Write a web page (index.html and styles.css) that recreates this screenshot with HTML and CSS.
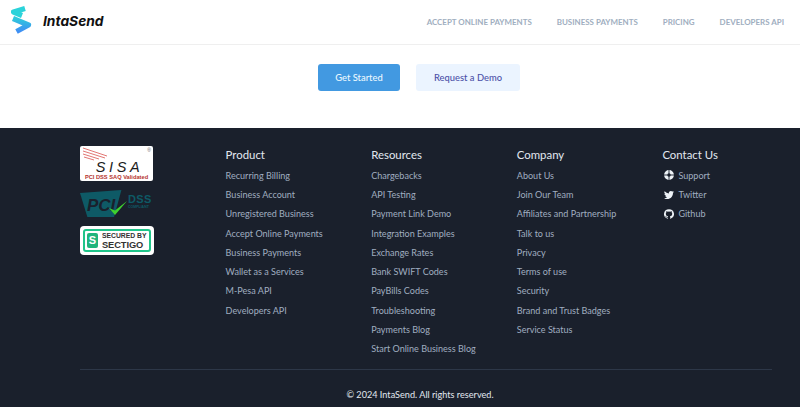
FILE: index.html
```html
<!DOCTYPE html>
<html lang="en">
<head>
<meta charset="utf-8">
<title>IntaSend</title>
<link rel="stylesheet" href="styles.css">
</head>
<body>
<header class="topbar">
  <a class="brand" href="#">
    <svg class="brand-mark" width="22" height="32" viewBox="11 4 22 32">
      <defs>
        <linearGradient id="g2" x1="0" y1="0" x2="0" y2="1"><stop offset="0" stop-color="#2fc8dc"/><stop offset="1" stop-color="#3f8ff4"/></linearGradient>
      </defs>
      <path d="M25 8.5 L13.5 12 L22 15.5" fill="none" stroke="#2bd3da" stroke-width="5.2" stroke-linejoin="round"/>
      <path d="M13 18.5 L28.5 25 L16.5 31.5" fill="none" stroke="url(#g2)" stroke-width="5.2" stroke-linejoin="round"/>
    </svg>
    <span class="brand-name">IntaSend</span>
  </a>
  <nav class="nav">
    <a href="#">ACCEPT ONLINE PAYMENTS</a>
    <a href="#">BUSINESS PAYMENTS</a>
    <a href="#">PRICING</a>
    <a href="#">DEVELOPERS API</a>
  </nav>
</header>
<section class="cta">
  <a class="btn btn-primary" href="#">Get Started</a>
  <a class="btn btn-soft" href="#">Request a Demo</a>
</section>
<footer class="footer">
  <div class="cols">
    <div class="col badges">
      <div class="badge sisa">
        <svg class="sisa-lines" width="26" height="18" viewBox="0 0 26 18"><path d="M1 1 L25 9 M1 4 L23 11 M1 7 L17 12 M2 10 L12 13" stroke="#d9534f" stroke-width=".8" fill="none"/></svg>
        <span class="sisa-reg">®</span>
        <span class="sisa-mark">SISA</span>
        <span class="sisa-sub">PCI DSS SAQ Validated</span>
      </div>
      <div class="pci">
        <span class="pci-word">PCI</span>
        <svg class="pci-check" width="20" height="20" viewBox="0 0 20 20"><path d="M1 11 L7 18 L19 4 L7 13.5 Z" fill="#3fd12f"/></svg>
        <span class="pci-side"><b>DSS</b><i>COMPLIANT</i></span>
      </div>
      <div class="sectigo">
        <span class="sectigo-inner">
          <span class="sectigo-s">S</span>
          <span class="sectigo-text"><span>SECURED BY</span><b>SECTIGO</b></span>
        </span>
      </div>
    </div>
    <div class="col">
      <h3>Product</h3>
      <a href="#">Recurring Billing</a>
      <a href="#">Business Account</a>
      <a href="#">Unregistered Business</a>
      <a href="#">Accept Online Payments</a>
      <a href="#">Business Payments</a>
      <a href="#">Wallet as a Services</a>
      <a href="#">M-Pesa API</a>
      <a href="#">Developers API</a>
    </div>
    <div class="col">
      <h3>Resources</h3>
      <a href="#">Chargebacks</a>
      <a href="#">API Testing</a>
      <a href="#">Payment Link Demo</a>
      <a href="#">Integration Examples</a>
      <a href="#">Exchange Rates</a>
      <a href="#">Bank SWIFT Codes</a>
      <a href="#">PayBills Codes</a>
      <a href="#">Troubleshooting</a>
      <a href="#">Payments Blog</a>
      <a href="#">Start Online Business Blog</a>
    </div>
    <div class="col">
      <h3>Company</h3>
      <a href="#">About Us</a>
      <a href="#">Join Our Team</a>
      <a href="#">Affiliates and Partnership</a>
      <a href="#">Talk to us</a>
      <a href="#">Privacy</a>
      <a href="#">Terms of use</a>
      <a href="#">Security</a>
      <a href="#">Brand and Trust Badges</a>
      <a href="#">Service Status</a>
    </div>
    <div class="col">
      <h3>Contact Us</h3>
      <a class="ico" href="#"><svg width="10" height="10" viewBox="0 0 10 10"><circle cx="5" cy="5" r="3.3" fill="none" stroke="#edf2f7" stroke-width="3.2"/><path d="M5 0V10M0 5H10" stroke="#1a202c" stroke-width=".9"/></svg>Support</a>
      <a class="ico" href="#"><svg width="10" height="10" viewBox="0 0 24 24"><path fill="#edf2f7" d="M23.95 4.57a10 10 0 0 1-2.82.77 4.96 4.96 0 0 0 2.16-2.72 9.9 9.9 0 0 1-3.13 1.19 4.92 4.92 0 0 0-8.38 4.48A13.98 13.98 0 0 1 1.64 3.16a4.92 4.92 0 0 0 1.52 6.57 4.9 4.9 0 0 1-2.23-.62v.06a4.92 4.92 0 0 0 3.95 4.83 4.9 4.9 0 0 1-2.21.08 4.94 4.94 0 0 0 4.6 3.42A9.87 9.87 0 0 1 0 19.54a13.94 13.94 0 0 0 7.55 2.21c9.05 0 14-7.5 14-13.98 0-.21 0-.42-.02-.63a9.94 9.94 0 0 0 2.42-2.57z"/></svg>Twitter</a>
      <a class="ico" href="#"><svg width="10" height="10" viewBox="0 0 24 24"><path fill="#edf2f7" d="M12 .3a12 12 0 0 0-3.8 23.38c.6.12.83-.26.83-.57v-2.23c-3.34.73-4.03-1.42-4.03-1.42-.55-1.39-1.33-1.76-1.33-1.76-1.09-.74.08-.73.08-.73 1.2.09 1.84 1.24 1.84 1.24 1.07 1.83 2.81 1.3 3.5 1 .1-.78.42-1.31.76-1.61-2.67-.3-5.47-1.33-5.47-5.93 0-1.31.47-2.38 1.24-3.22-.14-.3-.54-1.52.1-3.18 0 0 1-.32 3.3 1.23a11.5 11.5 0 0 1 6 0c2.28-1.55 3.29-1.23 3.29-1.23.64 1.66.24 2.88.12 3.18a4.65 4.65 0 0 1 1.23 3.22c0 4.61-2.8 5.63-5.48 5.92.42.36.81 1.1.81 2.22v3.29c0 .32.22.7.82.58A12 12 0 0 0 12 .3z"/></svg>Github</a>
    </div>
  </div>
  <div class="rule"></div>
  <p class="copy">© 2024 IntaSend. All rights reserved.</p>
</footer>
</body>
</html>
```

FILE: styles.css
```css
* { box-sizing: border-box; }
html, body { margin: 0; padding: 0; }
body { width: 800px; height: 407px; overflow: hidden; background: #fff; font-family: Lato, "Noto Sans", sans-serif; }
a { text-decoration: none; color: inherit; }

.topbar { height: 45px; border-bottom: 1px solid #efefef; display: flex; align-items: center; justify-content: space-between; padding: 0 16px 0 11px; }
.brand { display: flex; align-items: center; gap: 10px; }
.brand-mark { display: block; margin-top: -4px; }
.brand-name { font: italic 700 13.8px Inter, sans-serif; color: #111; margin-top: -3px; }
.nav { display: flex; gap: 25px; font: 700 7.95px Lato, sans-serif; color: #a0aec0; padding-bottom: 1px; }

.cta { height: 83px; display: flex; align-items: flex-start; gap: 16px; padding: 19px 0 0 318px; }
.btn { height: 27px; display: flex; align-items: center; justify-content: center; border-radius: 3px; font-size: 9.4px; font-weight: 500; }
.btn-primary { width: 82px; background: #4299e1; color: #ebf8ff; }
.btn-soft { width: 104px; background: #ebf4ff; color: #4c51a8; }

.footer { height: 279px; background: #1a202c; padding: 18px 28px 0 80px; }
.cols { display: grid; grid-template-columns: repeat(5, 145.6px); height: 223px; }
.col { display: flex; flex-direction: column; align-items: flex-start; }
.col h3 { margin: 0; height: 18px; font-size: 11.4px; line-height: 18px; font-weight: 400; color: #e2e8f0; }
.col a { height: 19.3px; line-height: 19.3px; font-size: 9.05px; color: #a0aec0; white-space: nowrap; }
.col h3 + a { margin-top: 1.7px; }
.col .ico { display: flex; align-items: center; gap: 4px; padding-left: 2px; }

.badge { position: relative; width: 73px; height: 35px; border-radius: 2px; background: #fff; display: flex; flex-direction: column; align-items: center; overflow: hidden; }
.sisa-lines { position: absolute; left: 2px; top: 1px; }
.sisa-reg { position: absolute; right: 2px; top: 1px; font: 5px/6px "Liberation Sans", sans-serif; color: #666; }
.sisa-mark { font: italic 400 14.5px/14px "Liberation Sans", sans-serif; letter-spacing: 3.6px; color: #1b1b1b; margin: 14px 0 0 6px; }
.sisa-sub { font: 700 5.7px/7px "Liberation Sans", sans-serif; color: #b5332e; white-space: nowrap; }
.pci { position: relative; width: 73px; height: 28px; margin-top: 9px; display: flex; color: #0e5a66; }
.pci-word { width: 46px; height: 27px; background: #0e5a66; color: #1a202c; font: italic 700 17px/32px "Liberation Sans", sans-serif; padding-left: 7px; clip-path: polygon(0 3px, 90% 0, 74% 100%, 16% 100%); overflow: hidden; }
.pci-check { position: absolute; left: 28px; top: 7px; }
.pci-side { display: flex; flex-direction: column; margin-left: 2px; }
.pci-side b { font: 700 11px/12px "Liberation Sans", sans-serif; letter-spacing: .3px; margin-top: 3px; }
.pci-side i { font: normal 700 3.5px/5px "Liberation Sans", sans-serif; }
.sectigo { width: 74px; height: 29px; margin-top: 8px; background: #fff; border-radius: 4px; padding: 3px 3px; }
.sectigo-inner { height: 23px; border: 2px solid #1fc58a; border-radius: 3px; display: flex; align-items: center; gap: 4px; padding-left: 2px; }
.sectigo-s { width: 11px; height: 15px; background: #1fb57c; color: #fff; border-radius: 2px; font: 700 11px/15px "Liberation Sans", sans-serif; text-align: center; flex: none; }
.sectigo-text { display: flex; flex-direction: column; font: 700 7px/8px "Liberation Sans", sans-serif; color: #333; white-space: nowrap; transform: scaleX(.97); transform-origin: left center; }
.sectigo-text b { font-size: 9.6px; line-height: 10px; letter-spacing: -.1px; }

.rule { height: 1px; background: #2d3748; width: 692px; }
.copy { margin: 18px 0 0; width: 680px; text-align: center; font-size: 9.15px; line-height: 14px; color: #e2e8f0; }
```
